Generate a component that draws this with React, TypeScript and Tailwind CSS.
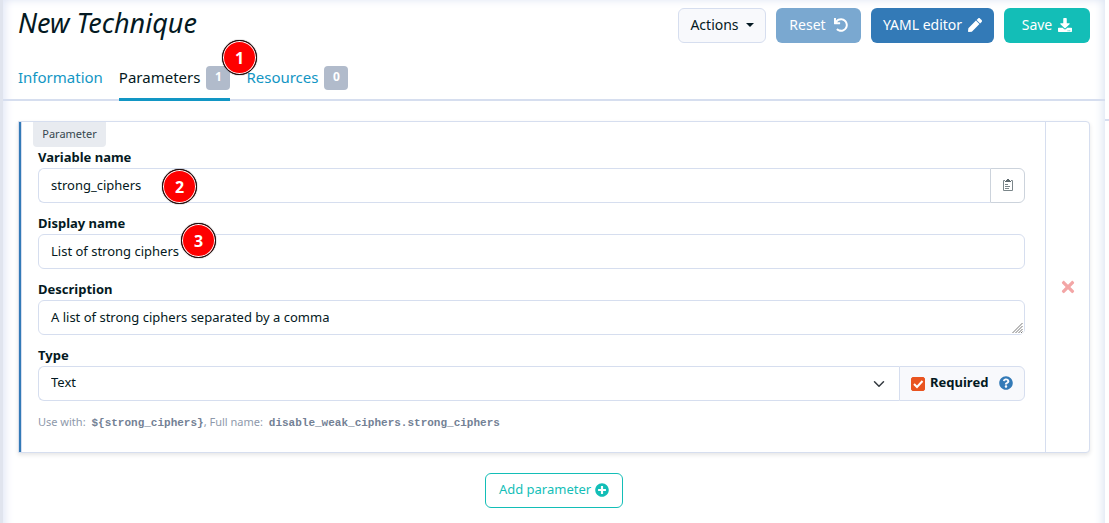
import type { ReactNode } from "react";
import { FaDownload, FaPen, FaPlusCircle, FaQuestionCircle, FaTimes, FaUndo } from "react-icons/fa";

const field =
  "block h-[35px] w-full min-w-0 rounded-md border border-[#d6deef] bg-white px-3 pb-[2px] text-[13px] text-[#041922] outline-none";

function Marker({ children, className }: { children: ReactNode; className: string }) {
  return (
    <span
      className={`absolute z-10 flex size-[35px] items-center justify-center rounded-full border border-[#111] bg-[#fe0000] text-base font-bold text-white shadow-[inset_0_0_0_1px_#fff,0_0_1px_#000] ${className}`}
    >
      {children}
    </span>
  );
}

function Tab({ label, count, active }: { label: string; count?: number; active?: boolean }) {
  return (
    <a
      href="#"
      className={`flex h-[46px] items-center gap-[6px] border-b-[3px] pt-[2px] text-[15px] ${
        active ? "border-[#1296c4] text-[#041922]" : "border-transparent text-[#1296c4]"
      }`}
    >
      {label}
      {count !== undefined && (
        <span className="flex h-6 w-6 items-center justify-center rounded bg-[#b1bbcb] pb-[2px] text-xs font-bold text-white">
          {count}
        </span>
      )}
    </a>
  );
}

function Label({ htmlFor, children }: { htmlFor: string; children: ReactNode }) {
  return (
    <label htmlFor={htmlFor} className="block h-[21px] text-[13px] leading-5 font-bold">
      {children}
    </label>
  );
}

function ClipboardIcon() {
  return (
    <svg width="12" height="14" viewBox="0 0 12 14" fill="none" stroke="#7b868a" aria-hidden="true">
      <path d="M3 2.500H1.500v10h9v-10H9" />
      <path d="M3 3.500h6M4 2.500h4M5 1.500h2" stroke="#5d696e" />
      <path d="M3 6.500h3M3 8.500h5M3 10.500h4" />
    </svg>
  );
}

export default function App() {
  return (
    <div className="flex min-h-screen bg-white font-['Noto_Sans','Open_Sans',sans-serif] text-[#041922]">
      <div className="w-[3px] bg-[#e0e4ee]" />
      <main className="min-w-0 flex-1 pt-2 pb-[15px] shadow-[inset_12px_0_10px_-10px_#dfe5f5,inset_-12px_0_10px_-10px_#dbe4f2,inset_0_8px_8px_-8px_#dfe5f5]">
        <header className="flex h-[35px] items-center justify-between px-[15px]">
          <h1 className="pb-[6px] text-[27px] leading-[30px] italic">New Technique</h1>
          <div className="flex gap-[10px] text-sm">
            <button className="flex h-[35px] w-[88px] items-center justify-center gap-[7px] rounded-md border border-[#d6deef] bg-[#f8f9fc] pb-[2px]">
              Actions
              <svg width="8" height="4" viewBox="0 0 8 4" aria-hidden="true">
                <path d="M0 0h8L4 4z" fill="currentColor" />
              </svg>
            </button>
            <button className="flex h-[35px] w-[85px] items-center justify-center gap-2 rounded-md bg-[#7aa8d0] pb-[2px] text-white">
              Reset <FaUndo />
            </button>
            <button className="flex h-[35px] w-[123px] items-center justify-center gap-[6px] rounded-md bg-[#337ab7] pb-[2px] text-white">
              YAML editor <FaPen />
            </button>
            <button className="flex h-[35px] w-[86px] items-center justify-center gap-[6px] rounded-md bg-[#13beb7] pb-[2px] text-white">
              Save <FaDownload />
            </button>
          </div>
        </header>

        <div className="relative mt-3">
          <nav className="flex gap-4 px-[15px] shadow-[inset_0_-2px_0_#d6deef]">
            <Tab label="Information" />
            <Tab label="Parameters" count={1} active />
            <Tab label="Resources" count={0} />
          </nav>
          <Marker className="top-[-15px] left-[219px]">1</Marker>
        </div>

        <section className="mx-[15px] mt-5 flex rounded-r border border-[#d6deef] bg-white shadow-[0_2px_4px_#0000001a]">
          <div className="w-[2px] bg-[#337ab7]" />
          <div className="min-w-0 flex-1 border-l border-[#d6deef] pr-5 pb-5 pl-4">
            <span className="-ml-[5px] flex h-[25px] w-[73px] items-center justify-center rounded-b bg-[#e8ebf0] text-[11px] text-[#36474e]">
              Parameter
            </span>

            <div className="relative mb-[10px]">
              <Label htmlFor="variable">Variable name</Label>
              <div className="flex">
                <input id="variable" defaultValue="strong_ciphers" className={`${field} rounded-r-none border-r-0`} />
                <button
                  aria-label="Copy"
                  className="flex h-[35px] w-[35px] shrink-0 items-center justify-center rounded-r-md border border-[#ccd3dc] pb-[2px]"
                >
                  <ClipboardIcon />
                </button>
              </div>
              <Marker className="top-[22px] left-[124px]">2</Marker>
            </div>

            <div className="relative mb-[10px]">
              <Label htmlFor="display">Display name</Label>
              <input id="display" defaultValue="List of strong ciphers" className={field} />
              <Marker className="top-[10px] left-[143px]">3</Marker>
            </div>

            <div className="relative mb-[10px]">
              <Label htmlFor="description">Description</Label>
              <textarea
                id="description"
                rows={1}
                defaultValue="A list of strong ciphers separated by a comma"
                className={`${field} resize-y py-[6px] leading-5`}
              />
              <svg
                className="pointer-events-none absolute right-[1px] bottom-[1px] rounded-br bg-white"
                width="13"
                height="13"
                viewBox="0 0 13 13"
                stroke="#777"
                aria-hidden="true"
              >
                <path d="M1.500 12 11.500 2M4.500 12l7-7M7.500 12l4-4M10 12l1.500-1.500" />
              </svg>
            </div>

            <Label htmlFor="type">Type</Label>
            <div className="flex">
              <div className="relative min-w-0 flex-1">
                <select id="type" className={`${field} appearance-none rounded-r-none border-r-0`}>
                  <option>Text</option>
                </select>
                <svg
                  className="pointer-events-none absolute top-3 right-[14px]"
                  width="12"
                  height="12"
                  viewBox="0 0 16 16"
                  fill="none"
                  stroke="#343a40"
                  strokeWidth="2"
                  strokeLinecap="round"
                  strokeLinejoin="round"
                  aria-hidden="true"
                >
                  <path d="m2 5 6 6 6-6" />
                </svg>
              </div>
              <div className="flex h-[35px] w-[126px] items-center rounded-r-md border border-[#d6deef] bg-[#f8f9fc] pl-[11px]">
                <label className="flex items-center gap-[5px] text-[13px] font-bold">
                  <span className="relative flex size-[14px]">
                    <input
                      type="checkbox"
                      defaultChecked
                      className="peer size-[14px] appearance-none rounded-[2px] border border-[#e95420] checked:bg-[#e95420]"
                    />
                    <svg
                      className="pointer-events-none absolute inset-0 hidden peer-checked:block"
                      width="14"
                      height="14"
                      viewBox="0 0 14 14"
                      fill="none"
                      stroke="white"
                      strokeWidth="2"
                      aria-hidden="true"
                    >
                      <path d="m3 7 3 3 5.500-6" />
                    </svg>
                  </span>
                  <span className="pb-[2px]">Required</span>
                </label>
                <FaQuestionCircle className="mr-[11px] mb-[2px] ml-auto size-[14px] text-[#337ab7]" />
              </div>
            </div>

            <p className="mt-3 text-[11px] leading-[18px] text-[#8e99ab]">
              Use with:{" "}
              <code className="ml-[3px] font-['Liberation_Mono',monospace] font-bold text-[#738195]">
                {"${strong_ciphers}"}
              </code>
              , Full name:{" "}
              <code className="ml-[3px] font-['Liberation_Mono',monospace] font-bold text-[#738195]">
                disable_weak_ciphers.strong_ciphers
              </code>
            </p>
          </div>
          <button
            aria-label="Delete parameter"
            className="flex w-11 items-center justify-center border-l border-[#d6deef] text-[#f3a6a6]"
          >
            <FaTimes className="size-[18px]" />
          </button>
        </section>

        <button className="mx-auto mt-5 flex h-[35px] w-[138px] items-center justify-center gap-1 rounded-md border border-[#13beb7] pb-[2px] text-[13px] text-[#13beb7]">
          Add parameter <FaPlusCircle className="size-[14px]" />
        </button>
      </main>
      <div className="w-1 pt-[119px]">
        <div className="h-[2px] bg-[#d6deef]" />
      </div>
    </div>
  );
}
